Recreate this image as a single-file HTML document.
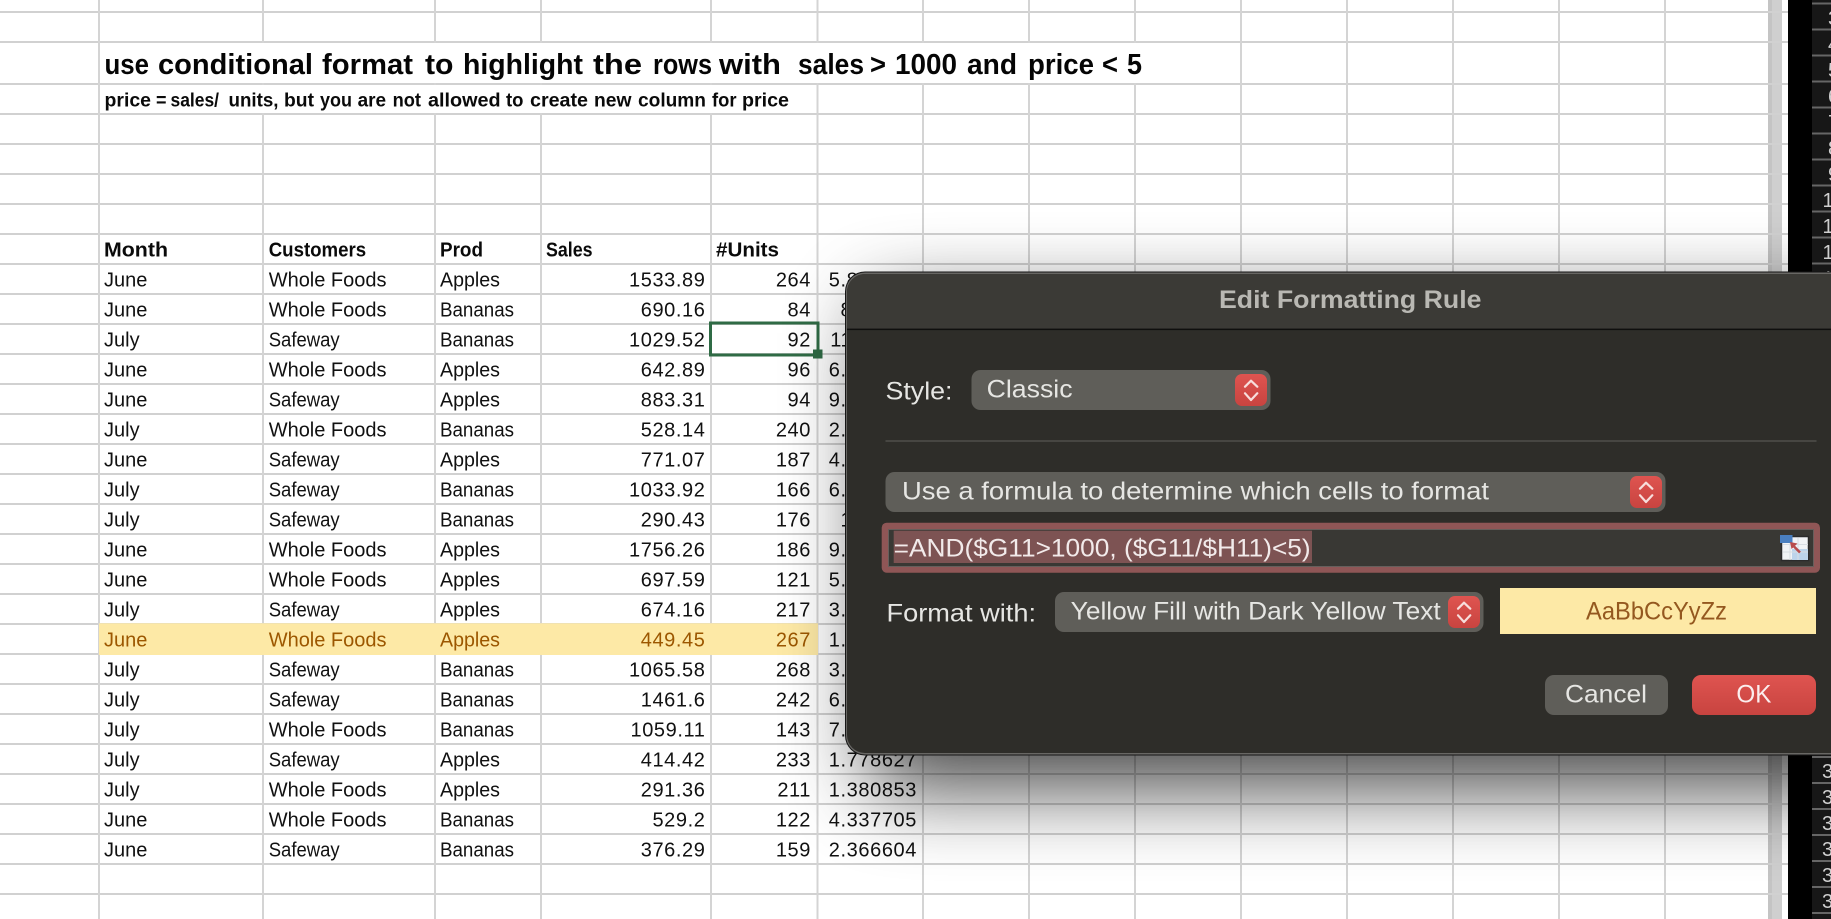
<!DOCTYPE html>
<html lang="en">
<head>
<meta charset="utf-8">
<title>Edit Formatting Rule</title>
<style>
html,body{margin:0;padding:0;width:1831px;height:919px;overflow:hidden;background:#fff}
svg{display:block;position:absolute;left:0;top:0}
text{font-family:"Liberation Sans",sans-serif;white-space:pre}
.c text,.c{font-size:20px;fill:#111}
.h{font-size:20px;font-weight:bold;fill:#0a0a0a}
.n{text-anchor:end;letter-spacing:.6px}
.p{text-anchor:end;letter-spacing:.6px}
.y,.y text{fill:#9c5700}
.d{font-size:25px;fill:#e6e6e3}
.r{font-size:20px;fill:#cfcfcf}
.t text{font-size:29px;font-weight:bold;fill:#050505}
.s text{font-size:19.5px;font-weight:bold;fill:#0a0a0a}
</style>
</head>
<body>
<svg width="1831" height="919" viewBox="0 0 1831 919" xmlns="http://www.w3.org/2000/svg">
<defs>
<filter id="blur" filterUnits="userSpaceOnUse" x="500" y="0" width="1700" height="1200"><feGaussianBlur stdDeviation="42"/></filter>
<linearGradient id="red" x1="0" y1="0" x2="0" y2="1"><stop offset="0" stop-color="#df5450"/><stop offset="1" stop-color="#c84440"/></linearGradient>
</defs>
<rect width="1831" height="919" fill="#fff"/>

<!-- scrollbar -->
<rect x="1768" y="0" width="4" height="919" fill="#c4c4c4"/>
<rect x="1772" y="0" width="10" height="919" fill="#cfcfcf"/>

<!-- horizontal grid -->
<g fill="#d1d1d1">
<rect x="0" y="11" width="1788" height="2"/><rect x="0" y="41" width="1788" height="2"/><rect x="0" y="83" width="1788" height="2"/>
<rect x="0" y="113" width="1788" height="2"/><rect x="0" y="143" width="1788" height="2"/><rect x="0" y="173" width="1788" height="2"/>
<rect x="0" y="203" width="1788" height="2"/><rect x="0" y="233" width="1788" height="2"/><rect x="0" y="263" width="1788" height="2"/>
<rect x="0" y="293" width="1788" height="2"/><rect x="0" y="323" width="1788" height="2"/><rect x="0" y="353" width="1788" height="2"/>
<rect x="0" y="383" width="1788" height="2"/><rect x="0" y="413" width="1788" height="2"/><rect x="0" y="443" width="1788" height="2"/>
<rect x="0" y="473" width="1788" height="2"/><rect x="0" y="503" width="1788" height="2"/><rect x="0" y="533" width="1788" height="2"/>
<rect x="0" y="563" width="1788" height="2"/><rect x="0" y="593" width="1788" height="2"/><rect x="0" y="623" width="1788" height="2"/>
<rect x="0" y="653" width="1788" height="2"/><rect x="0" y="683" width="1788" height="2"/><rect x="0" y="713" width="1788" height="2"/>
<rect x="0" y="743" width="1788" height="2"/><rect x="0" y="773" width="1788" height="2"/><rect x="0" y="803" width="1788" height="2"/>
<rect x="0" y="833" width="1788" height="2"/><rect x="0" y="863" width="1788" height="2"/><rect x="0" y="893" width="1788" height="2"/>
</g>
<!-- vertical grid -->
<g fill="#d4d4d4">
<rect x="98" y="0" width="2" height="919"/><rect x="262" y="0" width="2" height="919"/><rect x="434" y="0" width="2" height="919"/>
<rect x="540" y="0" width="2" height="919"/><rect x="710" y="0" width="2" height="919"/><rect x="816.5" y="0" width="2" height="919"/>
<rect x="922" y="0" width="2" height="919"/><rect x="1028" y="0" width="2" height="919"/><rect x="1134" y="0" width="2" height="919"/>
<rect x="1240" y="0" width="2" height="919"/><rect x="1346" y="0" width="2" height="919"/><rect x="1452" y="0" width="2" height="919"/>
<rect x="1558" y="0" width="2" height="919"/><rect x="1664" y="0" width="2" height="919"/>
</g>
<rect x="100" y="43" width="1040" height="40" fill="#fff"/>
<rect x="100" y="85" width="716" height="28" fill="#fff"/>

<!-- titles -->
<g class="t">
<text x="104.5" y="74" textLength="44.5" lengthAdjust="spacingAndGlyphs">use</text>
<text x="158" y="74" textLength="155" lengthAdjust="spacingAndGlyphs">conditional</text>
<text x="322" y="74" textLength="91" lengthAdjust="spacingAndGlyphs">format</text>
<text x="425" y="74" textLength="28.5" lengthAdjust="spacingAndGlyphs">to</text>
<text x="463" y="74" textLength="120" lengthAdjust="spacingAndGlyphs">highlight</text>
<text x="593" y="74" textLength="49" lengthAdjust="spacingAndGlyphs">the</text>
<text x="653" y="74" textLength="59" lengthAdjust="spacingAndGlyphs">rows</text>
<text x="719" y="74" textLength="62" lengthAdjust="spacingAndGlyphs">with</text>
<text x="798" y="74" textLength="66" lengthAdjust="spacingAndGlyphs">sales</text>
<text x="870" y="74" textLength="16" lengthAdjust="spacingAndGlyphs">&gt;</text>
<text x="895" y="74" textLength="62" lengthAdjust="spacingAndGlyphs">1000</text>
<text x="967" y="74" textLength="50" lengthAdjust="spacingAndGlyphs">and</text>
<text x="1028" y="74" textLength="66" lengthAdjust="spacingAndGlyphs">price</text>
<text x="1102" y="74" textLength="16" lengthAdjust="spacingAndGlyphs">&lt;</text>
<text x="1127" y="74" textLength="15" lengthAdjust="spacingAndGlyphs">5</text>
</g>
<g class="s">
<text x="104.5" y="106.5" textLength="46.5" lengthAdjust="spacingAndGlyphs">price</text>
<text x="156" y="106.5" textLength="10.5" lengthAdjust="spacingAndGlyphs">=</text>
<text x="170.5" y="106.5" textLength="48.5" lengthAdjust="spacingAndGlyphs">sales/</text>
<text x="228.5" y="106.5" textLength="50" lengthAdjust="spacingAndGlyphs">units,</text>
<text x="284" y="106.5" textLength="30" lengthAdjust="spacingAndGlyphs">but</text>
<text x="320" y="106.5" textLength="32" lengthAdjust="spacingAndGlyphs">you</text>
<text x="357.6" y="106.5" textLength="28.5" lengthAdjust="spacingAndGlyphs">are</text>
<text x="392.6" y="106.5" textLength="28.4" lengthAdjust="spacingAndGlyphs">not</text>
<text x="428" y="106.5" textLength="72.6" lengthAdjust="spacingAndGlyphs">allowed</text>
<text x="506" y="106.5" textLength="17.5" lengthAdjust="spacingAndGlyphs">to</text>
<text x="530" y="106.5" textLength="58" lengthAdjust="spacingAndGlyphs">create</text>
<text x="594" y="106.5" textLength="37.5" lengthAdjust="spacingAndGlyphs">new</text>
<text x="638" y="106.5" textLength="68" lengthAdjust="spacingAndGlyphs">column</text>
<text x="712" y="106.5" textLength="24.5" lengthAdjust="spacingAndGlyphs">for</text>
<text x="742" y="106.5" textLength="47" lengthAdjust="spacingAndGlyphs">price</text>
</g>

<!-- headers -->
<g class="h">
<text x="104" y="256.7" textLength="64" lengthAdjust="spacingAndGlyphs">Month</text>
<text x="268.7" y="256.7" textLength="97.5" lengthAdjust="spacingAndGlyphs">Customers</text>
<text x="440" y="256.7" textLength="43" lengthAdjust="spacingAndGlyphs">Prod</text>
<text x="546" y="256.7" textLength="46.5" lengthAdjust="spacingAndGlyphs">Sales</text>
<text x="716" y="256.7" textLength="63" lengthAdjust="spacingAndGlyphs">#Units</text>
</g>

<!-- highlight row -->
<rect x="99" y="623.3" width="719" height="31.7" fill="#fde9a6"/>

<!-- data rows -->
<g class="c">
<text x="104" y="286.7">June</text><text x="268.7" y="286.7">Whole Foods</text><text x="440" y="286.7" textLength="60" lengthAdjust="spacingAndGlyphs">Apples</text><text class="n" x="705.5" y="286.7">1533.89</text><text class="n" x="811" y="286.7">264</text><text class="p" x="917" y="286.7">5.810189</text>
<text x="104" y="316.7">June</text><text x="268.7" y="316.7">Whole Foods</text><text x="440" y="316.7" textLength="74" lengthAdjust="spacingAndGlyphs">Bananas</text><text class="n" x="705.5" y="316.7">690.16</text><text class="n" x="811" y="316.7">84</text><text class="p" x="917" y="316.7">8.21619</text>
<text x="104" y="346.7">July</text><text x="268.7" y="346.7" textLength="71" lengthAdjust="spacingAndGlyphs">Safeway</text><text x="440" y="346.7" textLength="74" lengthAdjust="spacingAndGlyphs">Bananas</text><text class="n" x="705.5" y="346.7">1029.52</text><text class="n" x="811" y="346.7">92</text><text class="p" x="917" y="346.7">11.19043</text>
<text x="104" y="376.7">June</text><text x="268.7" y="376.7">Whole Foods</text><text x="440" y="376.7" textLength="60" lengthAdjust="spacingAndGlyphs">Apples</text><text class="n" x="705.5" y="376.7">642.89</text><text class="n" x="811" y="376.7">96</text><text class="p" x="917" y="376.7">6.696771</text>
<text x="104" y="406.7">June</text><text x="268.7" y="406.7" textLength="71" lengthAdjust="spacingAndGlyphs">Safeway</text><text x="440" y="406.7" textLength="60" lengthAdjust="spacingAndGlyphs">Apples</text><text class="n" x="705.5" y="406.7">883.31</text><text class="n" x="811" y="406.7">94</text><text class="p" x="917" y="406.7">9.396915</text>
<text x="104" y="436.7">July</text><text x="268.7" y="436.7">Whole Foods</text><text x="440" y="436.7" textLength="74" lengthAdjust="spacingAndGlyphs">Bananas</text><text class="n" x="705.5" y="436.7">528.14</text><text class="n" x="811" y="436.7">240</text><text class="p" x="917" y="436.7">2.200583</text>
<text x="104" y="466.7">June</text><text x="268.7" y="466.7" textLength="71" lengthAdjust="spacingAndGlyphs">Safeway</text><text x="440" y="466.7" textLength="60" lengthAdjust="spacingAndGlyphs">Apples</text><text class="n" x="705.5" y="466.7">771.07</text><text class="n" x="811" y="466.7">187</text><text class="p" x="917" y="466.7">4.123369</text>
<text x="104" y="496.7">July</text><text x="268.7" y="496.7" textLength="71" lengthAdjust="spacingAndGlyphs">Safeway</text><text x="440" y="496.7" textLength="74" lengthAdjust="spacingAndGlyphs">Bananas</text><text class="n" x="705.5" y="496.7">1033.92</text><text class="n" x="811" y="496.7">166</text><text class="p" x="917" y="496.7">6.228434</text>
<text x="104" y="526.7">July</text><text x="268.7" y="526.7" textLength="71" lengthAdjust="spacingAndGlyphs">Safeway</text><text x="440" y="526.7" textLength="74" lengthAdjust="spacingAndGlyphs">Bananas</text><text class="n" x="705.5" y="526.7">290.43</text><text class="n" x="811" y="526.7">176</text><text class="p" x="917" y="526.7">1.65017</text>
<text x="104" y="556.7">June</text><text x="268.7" y="556.7">Whole Foods</text><text x="440" y="556.7" textLength="60" lengthAdjust="spacingAndGlyphs">Apples</text><text class="n" x="705.5" y="556.7">1756.26</text><text class="n" x="811" y="556.7">186</text><text class="p" x="917" y="556.7">9.442258</text>
<text x="104" y="586.7">June</text><text x="268.7" y="586.7">Whole Foods</text><text x="440" y="586.7" textLength="60" lengthAdjust="spacingAndGlyphs">Apples</text><text class="n" x="705.5" y="586.7">697.59</text><text class="n" x="811" y="586.7">121</text><text class="p" x="917" y="586.7">5.765207</text>
<text x="104" y="616.7">July</text><text x="268.7" y="616.7" textLength="71" lengthAdjust="spacingAndGlyphs">Safeway</text><text x="440" y="616.7" textLength="60" lengthAdjust="spacingAndGlyphs">Apples</text><text class="n" x="705.5" y="616.7">674.16</text><text class="n" x="811" y="616.7">217</text><text class="p" x="917" y="616.7">3.106728</text>
<g class="y"><text x="104" y="646.7">June</text><text x="268.7" y="646.7">Whole Foods</text><text x="440" y="646.7" textLength="60" lengthAdjust="spacingAndGlyphs">Apples</text><text class="n" x="705.5" y="646.7">449.45</text><text class="n" x="811" y="646.7">267</text></g><text class="p" x="917" y="646.7">1.683333</text>
<text x="104" y="676.7">July</text><text x="268.7" y="676.7" textLength="71" lengthAdjust="spacingAndGlyphs">Safeway</text><text x="440" y="676.7" textLength="74" lengthAdjust="spacingAndGlyphs">Bananas</text><text class="n" x="705.5" y="676.7">1065.58</text><text class="n" x="811" y="676.7">268</text><text class="p" x="917" y="676.7">3.976045</text>
<text x="104" y="706.7">July</text><text x="268.7" y="706.7" textLength="71" lengthAdjust="spacingAndGlyphs">Safeway</text><text x="440" y="706.7" textLength="74" lengthAdjust="spacingAndGlyphs">Bananas</text><text class="n" x="705.5" y="706.7">1461.6</text><text class="n" x="811" y="706.7">242</text><text class="p" x="917" y="706.7">6.039669</text>
<text x="104" y="736.7">July</text><text x="268.7" y="736.7">Whole Foods</text><text x="440" y="736.7" textLength="74" lengthAdjust="spacingAndGlyphs">Bananas</text><text class="n" x="705.5" y="736.7">1059.11</text><text class="n" x="811" y="736.7">143</text><text class="p" x="917" y="736.7">7.406364</text>
<text x="104" y="766.7">July</text><text x="268.7" y="766.7" textLength="71" lengthAdjust="spacingAndGlyphs">Safeway</text><text x="440" y="766.7" textLength="60" lengthAdjust="spacingAndGlyphs">Apples</text><text class="n" x="705.5" y="766.7">414.42</text><text class="n" x="811" y="766.7">233</text><text class="p" x="917" y="766.7">1.778627</text>
<text x="104" y="796.7">July</text><text x="268.7" y="796.7">Whole Foods</text><text x="440" y="796.7" textLength="60" lengthAdjust="spacingAndGlyphs">Apples</text><text class="n" x="705.5" y="796.7">291.36</text><text class="n" x="811" y="796.7">211</text><text class="p" x="917" y="796.7">1.380853</text>
<text x="104" y="826.7">June</text><text x="268.7" y="826.7">Whole Foods</text><text x="440" y="826.7" textLength="74" lengthAdjust="spacingAndGlyphs">Bananas</text><text class="n" x="705.5" y="826.7">529.2</text><text class="n" x="811" y="826.7">122</text><text class="p" x="917" y="826.7">4.337705</text>
<text x="104" y="856.7">June</text><text x="268.7" y="856.7" textLength="71" lengthAdjust="spacingAndGlyphs">Safeway</text><text x="440" y="856.7" textLength="74" lengthAdjust="spacingAndGlyphs">Bananas</text><text class="n" x="705.5" y="856.7">376.29</text><text class="n" x="811" y="856.7">159</text><text class="p" x="917" y="856.7">2.366604</text>
</g>

<!-- selected cell -->
<rect x="710.5" y="323" width="107.5" height="32" fill="none" stroke="#2f6b45" stroke-width="3"/>
<rect x="813" y="349.5" width="9.5" height="9" fill="#2f6b45"/>

<!-- dialog shadow -->
<rect x="870" y="305" width="1100" height="483" fill="#000" opacity=".72" filter="url(#blur)"/>

<!-- right black strip and row headers -->
<rect x="1788" y="0" width="43" height="919" fill="#000"/>
<rect x="1812" y="0" width="19" height="919" fill="#171717"/>
<g fill="#666">
<rect x="1812" y="2.5" width="19" height="2"/><rect x="1812" y="28.5" width="19" height="2"/><rect x="1812" y="54.5" width="19" height="2"/>
<rect x="1812" y="80.5" width="19" height="2"/><rect x="1812" y="106.5" width="19" height="2"/><rect x="1812" y="132.5" width="19" height="2"/>
<rect x="1812" y="158.5" width="19" height="2"/><rect x="1812" y="184.5" width="19" height="2"/><rect x="1812" y="210.5" width="19" height="2"/>
<rect x="1812" y="236.5" width="19" height="2"/><rect x="1812" y="262.5" width="19" height="2"/>
<rect x="1812" y="756" width="19" height="2"/><rect x="1812" y="782" width="19" height="2"/><rect x="1812" y="808" width="19" height="2"/>
<rect x="1812" y="834" width="19" height="2"/><rect x="1812" y="860" width="19" height="2"/><rect x="1812" y="886" width="19" height="2"/><rect x="1812" y="912" width="19" height="2"/>
</g>
<g class="r">
<text x="1828" y="25">3</text><text x="1828" y="51">4</text><text x="1828" y="77">5</text><text x="1828" y="103">6</text><text x="1828" y="129">7</text><text x="1828" y="155">8</text><text x="1828" y="181">9</text>
<text x="1822.5" y="207">10</text><text x="1822.5" y="233">11</text><text x="1822.5" y="259">12</text><text x="1822.5" y="285">13</text>
<text x="1822" y="778">32</text><text x="1822" y="804">33</text><text x="1822" y="830">34</text><text x="1822" y="856">35</text><text x="1822" y="882">36</text><text x="1822" y="908">37</text>
</g>

<!-- dialog -->
<rect x="845" y="271.5" width="1010" height="484" rx="20" fill="#161616"/>
<rect x="846" y="272.5" width="1010" height="482" rx="19" fill="#686764"/>
<rect x="847" y="274" width="1010" height="479" rx="18" fill="#2e2d29"/>
<path d="M847 329V292a18 18 0 0 1 18-18H1831V329Z" fill="#3b3a36"/>
<rect x="847" y="328.6" width="984" height="1.5" fill="#0f0f0e"/>
<text x="1219" y="308" font-size="25" font-weight="bold" fill="#b9b8b3" textLength="262.5" lengthAdjust="spacingAndGlyphs">Edit Formatting Rule</text>

<text class="d" x="885.5" y="399.3" textLength="67" lengthAdjust="spacingAndGlyphs">Style:</text>
<rect x="971.5" y="370" width="299" height="40" rx="9" fill="#5f5e59"/>
<text class="d" x="986.6" y="397.7" textLength="86" lengthAdjust="spacingAndGlyphs">Classic</text>
<rect x="1235" y="374" width="32" height="32" rx="7" fill="url(#red)"/>
<path d="M1245 386.7l6-6 6.3 6M1245 393.3l6 6.7 6.3-6.7" fill="none" stroke="#f7dedc" stroke-width="2.2" stroke-linecap="round" stroke-linejoin="round"/>

<rect x="885.5" y="440" width="931" height="2" fill="#474642"/>

<rect x="885.5" y="472" width="780" height="40" rx="9" fill="#5f5e59"/>
<text class="d" x="902" y="499.3" textLength="587" lengthAdjust="spacingAndGlyphs">Use a formula to determine which cells to format</text>
<rect x="1630" y="476" width="32" height="32" rx="7" fill="url(#red)"/>
<path d="M1640 488.7l6-6 6.3 6M1640 495.3l6 6.7 6.3-6.7" fill="none" stroke="#f7dedc" stroke-width="2.2" stroke-linecap="round" stroke-linejoin="round"/>

<rect x="881.7" y="522.7" width="938.3" height="50" rx="5" fill="#8f5656"/>
<rect x="888.5" y="529.5" width="925" height="37" fill="#393834" stroke="#665f5c" stroke-width="1"/>
<rect x="893.7" y="530.7" width="418.3" height="32.3" fill="#7d5353"/>
<text x="893.7" y="556.7" font-size="25" fill="#f2eaea" textLength="417" lengthAdjust="spacingAndGlyphs">=AND($G11&gt;1000, ($G11/$H11)&lt;5)</text>
<!-- range picker icon -->
<rect x="1781.5" y="536.5" width="27" height="24" fill="#f1f3f6" stroke="#2b2b2b" stroke-width="1.5"/>
<rect x="1792" y="549" width="16" height="11" fill="#bcd3ea"/>
<path d="M1783 544.5h25M1783 552h25M1790 538v22M1798 538v22" stroke="#d8dde3" stroke-width="1" fill="none"/>
<rect x="1780" y="535" width="12.5" height="8" fill="#4a7fc0"/>
<path d="M1790 542l7.5 1.5-6 5.5Z" fill="#b94c4c"/>
<path d="M1794 546.5l6 6" fill="none" stroke="#b94c4c" stroke-width="2.6"/>

<text class="d" x="886.5" y="621.3" textLength="149.5" lengthAdjust="spacingAndGlyphs">Format with:</text>
<rect x="1055" y="592" width="428.5" height="40" rx="9" fill="#5f5e59"/>
<text class="d" x="1070.7" y="619.3" textLength="370" lengthAdjust="spacingAndGlyphs">Yellow Fill with Dark Yellow Text</text>
<rect x="1448" y="596" width="32" height="32" rx="7" fill="url(#red)"/>
<path d="M1458 608.7l6-6 6.3 6M1458 615.3l6 6.7 6.3-6.7" fill="none" stroke="#f7dedc" stroke-width="2.2" stroke-linecap="round" stroke-linejoin="round"/>

<rect x="1500" y="588" width="316" height="46" fill="#fde9a6"/>
<text x="1586" y="619.3" font-size="25" fill="#94581f" textLength="141" lengthAdjust="spacingAndGlyphs">AaBbCcYyZz</text>

<rect x="1545" y="675" width="123" height="40" rx="9" fill="#5f5e59"/>
<text class="d" x="1565" y="702.3" textLength="82" lengthAdjust="spacingAndGlyphs">Cancel</text>
<rect x="1692" y="675" width="124" height="40" rx="9" fill="url(#red)"/>
<text x="1736.4" y="702.3" font-size="25" fill="#fbeeee" textLength="35" lengthAdjust="spacingAndGlyphs">OK</text>
</svg>
</body>
</html>
